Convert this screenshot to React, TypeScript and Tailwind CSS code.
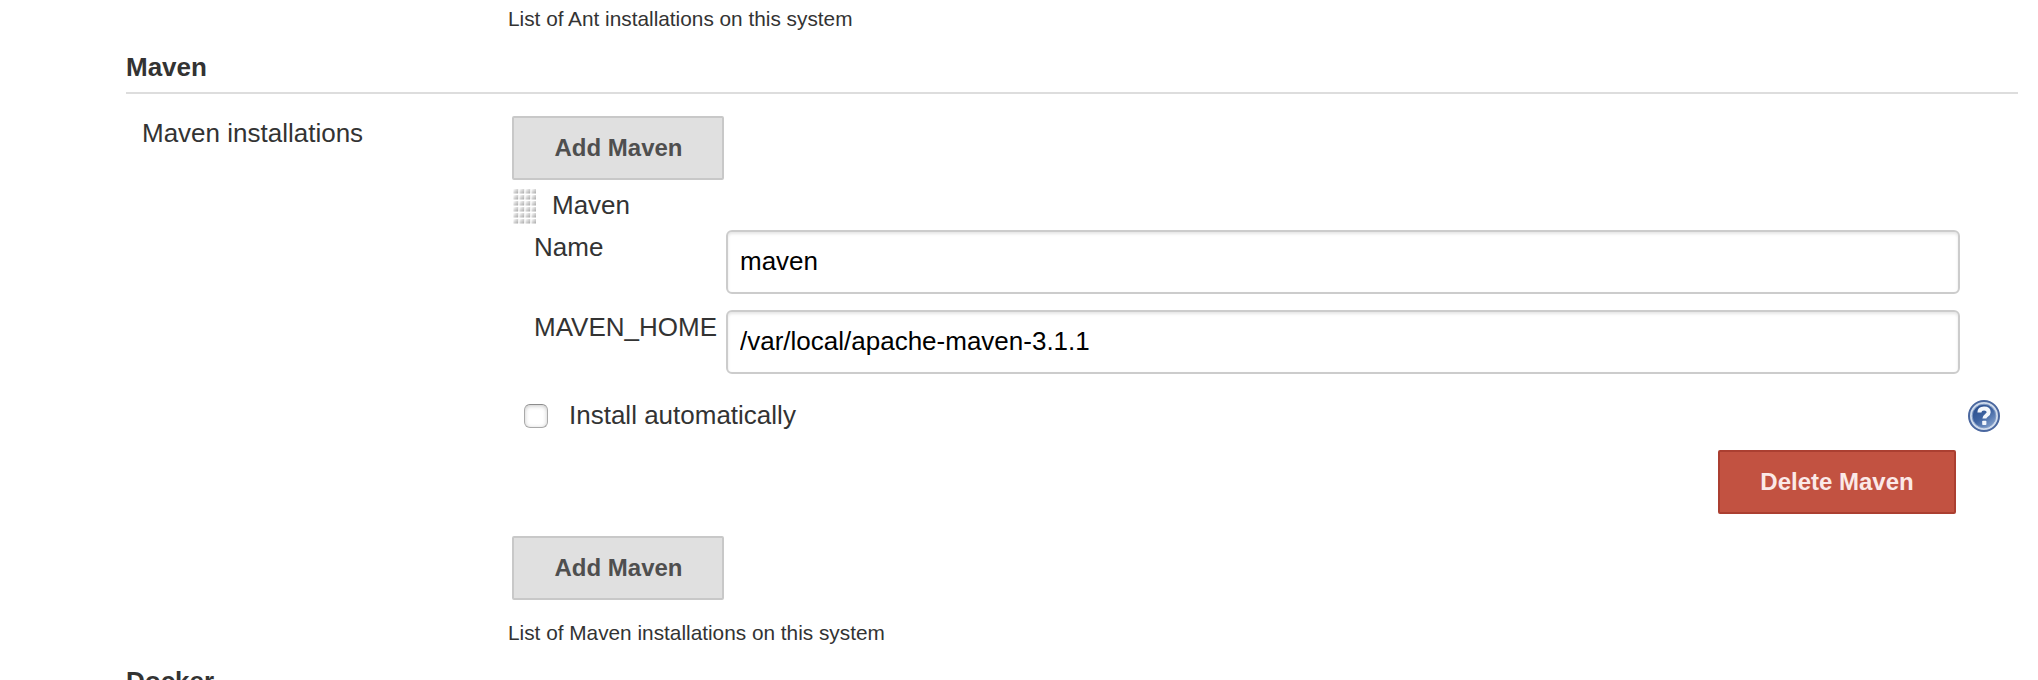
import React from "react";

function SectionTitle({ children }: { children: React.ReactNode }) {
  return (
    <h2 className="ml-[126px] mr-5 border-b-2 border-[#dddddd] pb-2.5 text-[26px] leading-[30px] font-bold">
      {children}
    </h2>
  );
}

function AddButton() {
  return (
    <button className="ml-1 block h-16 w-[212px] rounded-[2px] border-2 border-[#c8c8c8] bg-[#e0e0e0] pl-px text-center text-[24px] leading-[28px] font-bold text-[#4f4f4f]">
      Add Maven
    </button>
  );
}

function Field({ label, value }: { label: string; value: string }) {
  return (
    <label className="flex h-16">
      <span className="mt-0.5 ml-[26px] w-[192px] text-[26px] leading-[30px]">{label}</span>
      <input
        type="text"
        defaultValue={value}
        className="h-16 w-[1234px] rounded-[6px] border-2 border-[#cccccc] bg-white px-3 pb-0.5 text-[26px] leading-[30px] text-black shadow-[inset_0_2px_3px_rgba(0,0,0,0.1)] outline-none"
      />
    </label>
  );
}

function DragHandle() {
  return (
    <svg width="24" height="36" viewBox="0 0 24 36" className="mt-2 ml-[5px] shrink-0">
      <defs>
        <linearGradient id="dot" x1="0" y1="0" x2="1" y2="1">
          <stop offset="0.1" stopColor="#f6f6f6" />
          <stop offset="0.5" stopColor="#d2d2d2" />
          <stop offset="1" stopColor="#a6a6a6" />
        </linearGradient>
        <pattern id="grip" width="6" height="6" patternUnits="userSpaceOnUse">
          <rect x="0.4" y="1" width="4.8" height="4.6" rx="0.6" fill="url(#dot)" />
        </pattern>
      </defs>
      <rect width="23" height="36" fill="url(#grip)" />
    </svg>
  );
}

function HelpIcon() {
  return (
    <svg width="32" height="32" viewBox="0 0 32 32" className="shrink-0">
      <defs>
        <linearGradient id="help" x1="0.1" y1="0" x2="0.9" y2="1">
          <stop offset="0" stopColor="#274b8b" />
          <stop offset="0.5" stopColor="#3f64a2" />
          <stop offset="1" stopColor="#8ba8d2" />
        </linearGradient>
      </defs>
      <circle cx="16" cy="16" r="15" fill="#cfdbec" stroke="#4a679f" strokeWidth="2" />
      <circle cx="16" cy="16" r="11.8" fill="url(#help)" stroke="#7f99c4" strokeWidth="1" />
      <path
        d="M11.4 12.6C11.4 9.6 13.2 8.4 16 8.4C18.9 8.4 20.7 9.9 20.7 12.3C20.7 15.2 16.4 15.4 16.4 18.6"
        fill="none"
        stroke="#f4f7fc"
        strokeWidth="4"
      />
      <rect x="14.2" y="20.8" width="4.2" height="4.2" rx="0.8" fill="#f4f7fc" />
    </svg>
  );
}

export default function App() {
  return (
    <main className="h-[680px] w-[2038px] overflow-hidden bg-white font-['Liberation_Sans',Arial,sans-serif] text-[#333333]">
      <p className="pt-[7px] pl-[508px] text-[20.8px] leading-[24px]">List of Ant installations on this system</p>
      <div className="mt-[21px]">
        <SectionTitle>Maven</SectionTitle>
      </div>

      <section className="flex h-[572px] pt-[22px]">
        <div className="mt-0.5 w-[508px] shrink-0 pl-[142px] text-[26px] leading-[30px]">Maven installations</div>
        <div className="flex w-[1530px] flex-col">
          <AddButton />
          <div className="flex h-[50px]">
            <DragHandle />
            <span className="mt-[10px] ml-[15px] text-[26px] leading-[30px]">Maven</span>
          </div>
          <div className="flex flex-col gap-4">
            <Field label="Name" value="maven" />
            <Field label="MAVEN_HOME" value="/var/local/apache-maven-3.1.1" />
          </div>
          <div className="mt-[26px] flex h-8 w-[1492px] items-start justify-between pl-4">
            <label className="flex">
              <input
                type="checkbox"
                className="mt-1 size-6 appearance-none rounded-[6px] border border-[#a9a9a9] border-t-[#8c8c8c] bg-white shadow-[inset_0_1px_4px_rgba(0,0,0,0.22)]"
              />
              <span className="ml-[21px] text-[26px] leading-[30px]">Install automatically</span>
            </label>
            <HelpIcon />
          </div>
          <button className="mt-[18px] ml-[1210px] h-16 w-[238px] shrink-0 rounded-[2px] border-2 border-[#ab3f31] bg-[#c25241] text-[24px] leading-[28px] font-bold text-[#fbe9e7]">
            Delete Maven
          </button>
          <div className="mt-[22px]">
            <AddButton />
          </div>
          <p className="mt-[21px] text-[20.8px] leading-[24px]">List of Maven installations on this system</p>
        </div>
      </section>

      <SectionTitle>Docker</SectionTitle>
    </main>
  );
}
